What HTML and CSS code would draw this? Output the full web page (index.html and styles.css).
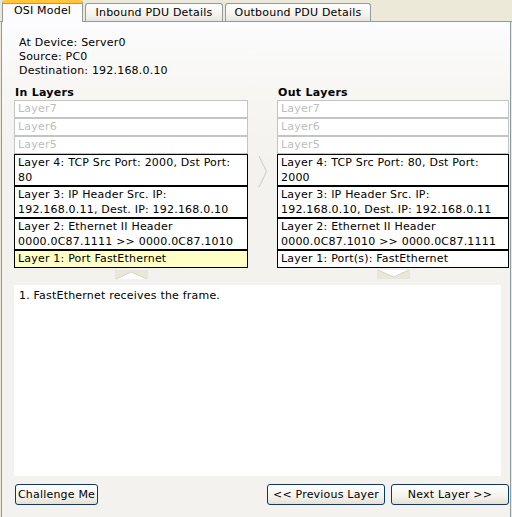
FILE: index.html
```html
<!DOCTYPE html>
<html>
<head>
<meta charset="utf-8">
<link rel="stylesheet" href="styles.css">
</head>
<body>
<div class="window">
  <div class="tabs">
    <div class="tab active">OSI Model</div>
    <div class="tab tab-in">Inbound PDU Details</div>
    <div class="tab tab-out">Outbound PDU Details</div>
  </div>
  <div class="panel">
    <div class="info">
      <div>At Device: Server0</div>
      <div>Source: PC0</div>
      <div>Destination: 192.168.0.10</div>
    </div>
    <div class="layers">
      <div class="col">
        <div class="col-title">In Layers</div>
        <div class="layer dim">Layer7</div>
        <div class="layer dim">Layer6</div>
        <div class="layer dim">Layer5</div>
        <div class="layer">Layer 4: TCP Src Port: 2000, Dst Port: 80</div>
        <div class="layer">Layer 3: IP Header Src. IP: 192.168.0.11, Dest. IP: 192.168.0.10</div>
        <div class="layer">Layer 2: Ethernet II Header 0000.0C87.1111 &gt;&gt; 0000.0C87.1010</div>
        <div class="layer current">Layer 1: Port FastEthernet</div>
        <svg class="varrow" width="33" height="9" viewBox="0 0 33 9">
          <rect x="0" y="0" width="33" height="9" fill="#e9e7da"/>
          <polygon points="1,9 16.5,2 32,9" fill="#ffffff"/>
          <polyline points="1,9 16.5,2 32,9" fill="none" stroke="#d6d4c8" stroke-width="1"/>
        </svg>
      </div>
      <div class="mid">
        <svg class="harrow" width="12" height="33" viewBox="0 0 12 33">
          <polyline points="2,1 9.5,16.5 2,32" fill="none" stroke="#d2d2d2" stroke-width="1.2"/>
        </svg>
      </div>
      <div class="col">
        <div class="col-title">Out Layers</div>
        <div class="layer dim">Layer7</div>
        <div class="layer dim">Layer6</div>
        <div class="layer dim">Layer5</div>
        <div class="layer">Layer 4: TCP Src Port: 80, Dst Port: 2000</div>
        <div class="layer">Layer 3: IP Header Src. IP: 192.168.0.10, Dest. IP: 192.168.0.11</div>
        <div class="layer">Layer 2: Ethernet II Header 0000.0C87.1010 &gt;&gt; 0000.0C87.1111</div>
        <div class="layer">Layer 1: Port(s): FastEthernet</div>
        <svg class="varrow" width="33" height="9" viewBox="0 0 33 9">
          <rect x="0" y="0" width="33" height="9" fill="#e9e7da"/>
          <polygon points="1,0 16.5,7 32,0" fill="#ffffff"/>
          <polyline points="1,0 16.5,7 32,0" fill="none" stroke="#d6d4c8" stroke-width="1"/>
        </svg>
      </div>
    </div>
    <div class="desc">1. FastEthernet receives the frame.</div>
    <div class="buttons">
      <button class="btn btn-challenge">Challenge Me</button>
      <div class="spacer"></div>
      <button class="btn btn-nav">&lt;&lt; Previous Layer</button>
      <button class="btn btn-nav">Next Layer &gt;&gt;</button>
    </div>
  </div>
</div>
</body>
</html>
```
FILE: styles.css
```css
html, body {
  margin: 0;
  padding: 0;
  background: #ece9d8;
}
body {
  font-family: "DejaVu Sans", sans-serif;
  font-size: 11px;
  letter-spacing: 0.2px;
  color: #000;
}
.window {
  box-sizing: border-box;
  width: 510px;
  height: 517px;
  margin-left: 1px;
  display: flex;
  flex-direction: column;
}
.tabs {
  display: flex;
  align-items: flex-end;
  height: 22px;
  box-sizing: border-box;
  padding-left: 2px;
  gap: 2px;
  border-bottom: 1px solid #919b9c;
  background: #ece9d8;
  margin-left: -1px;
  margin-right: -1px;
}
.tab {
  box-sizing: border-box;
  height: 18px;
  border: 1px solid #919b9c;
  border-bottom: none;
  border-radius: 3px 3px 0 0;
  background: linear-gradient(#ffffff, #f1f0ea 70%, #e6e4da);
  text-align: center;
  line-height: 17px;
  white-space: nowrap;
}
.tab.active {
  width: 81px;
  height: 22px;
  margin-bottom: -1px;
  background: #fcfcfe;
  border-top: 3px solid #ffc83c;
  box-shadow: inset 0 1px 0 #e68b2c;
  border-radius: 3px 3px 0 0;
  line-height: 16px;
  position: relative;
  z-index: 1;
}
.tab-in { width: 138px; }
.tab-out { width: 146px; }
.panel {
  flex: 1;
  box-sizing: border-box;
  border-left: 1px solid #919b9c;
  border-right: 1px solid #919b9c;
  background: linear-gradient(#fcfcfe 0px, #f7f6f3 70px, #f3f2ee 140px, #f3f2ee);
  padding: 14px 1px 0 12px;
}
.info {
  padding-left: 5px;
  line-height: 14px;
}
.layers {
  display: grid;
  grid-template-columns: 234px 29px 232px;
  margin-top: 8px;
}
.col {
  display: flex;
  flex-direction: column;
}
.col-title {
  font-weight: bold;
  line-height: 14px;
  padding-left: 1px;
  letter-spacing: 0.3px;
}
.layer {
  box-sizing: border-box;
  border: 1px solid #000;
  background: #fff;
  min-height: 18px;
  padding: 0 3px;
  line-height: 15px;
}
.layer.dim {
  border-color: #c4c4c4;
  color: #bdbdbd;
}
.layer.current {
  background: #ffffc6;
}
.varrow {
  display: block;
  margin: 2px auto 0;
}
.mid {
  display: flex;
  justify-content: center;
  align-items: flex-start;
  padding-top: 69px;
}
.harrow {
  display: block;
}
.desc {
  margin-top: 6px;
  margin-right: 8px;
  height: 191px;
  background: #fff;
  padding: 4px 5px;
  box-sizing: border-box;
  line-height: 14px;
}
.buttons {
  display: flex;
  margin-top: 8px;
  gap: 6px;
}
.spacer { flex: 1; }
.btn {
  font-family: "DejaVu Sans", sans-serif;
  font-size: 11px;
  letter-spacing: 0.2px;
  color: #000;
  height: 21px;
  box-sizing: border-box;
  border: 1px solid #003c74;
  border-radius: 3px;
  background: linear-gradient(#ffffff, #f4f3ee 60%, #e3e1d6);
  padding: 0;
  margin: 0;
  line-height: 19px;
}
.btn-challenge {
  width: 83px;
  margin-left: 1px;
}
.btn-nav {
  width: 118px;
}
```
